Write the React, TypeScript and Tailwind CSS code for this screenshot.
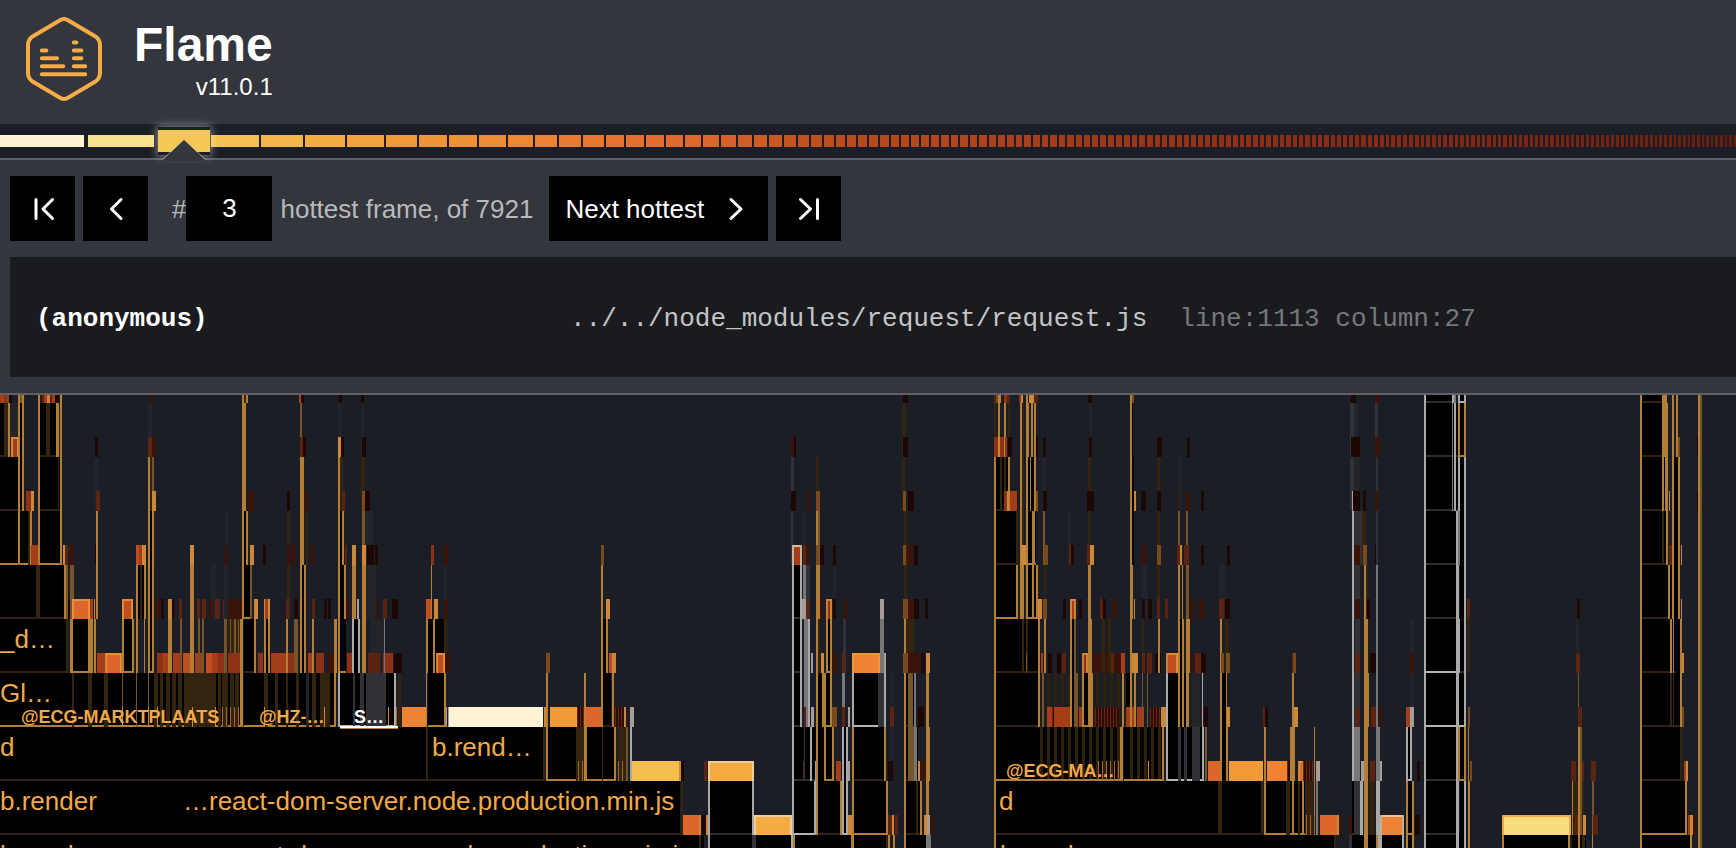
import { useState } from 'react';
import type { ReactNode } from 'react';

const ROW = 54;
const HEAT = 20;

// Full-height pieces of a stack frame: outlines, dividers and shading.
const LINES: Record<string, string> = {
  G: '#b27f34',
  M: '#765628',
  D: '#33240f',
  W: '#a9a9a9',
  S: '#77777a',
  E: '#313238',
  F: '#232429',
};

// Frame bodies, each with the colour of its lower edge.
const BODIES: Record<string, string> = {
  X: '#000000',
  K: '#30220f',
  B: '#b27f34',
  N: '#2d2d30',
  V: '#b4b4b4',
};

// Heat strip that sits on top of a frame, coldest to hottest.
const HEATS: Record<string, string> = {
  a: '#1d0703',
  b: '#3b1308',
  c: '#5c2410',
  d: '#8d3216',
  e: '#a63d1a',
  f: '#c14e21',
  g: '#dc662b',
  h: '#ed8333',
  i: '#f09a38',
  j: '#f4ac40',
  k: '#f5be4c',
  l: '#f7dd7e',
  m: '#fef4d3',
  q: '#784a1e',
  s: '#a89c99',
  y: '#cd8738',
};

// Each token is a kind, an x position and a width.
const ROWS: string[] = [
  'e0,4 d4,3 q7,2 a9,3 G18,2 M20,2 G22,2 D24,1 G38,2 c42,2 e44,3 y47,3 c50,2 e52,3 a55,4 G60,2 b149,3 G242,2 D244,2 G246,2 e299,2 a301,3 a339,3 a361,3 a903,5 c994,2 q996,2 G998,3 d1004,3 c1007,3 d1019,3 y1021,2 G1026,2 y1029,5 c1034,4 a1088,4 G1130,2 q1132,2 a1351,5 b1375,5 N1424,30 W1424,2 W1452,2 S1454,2 W1458,2 V1460,4 W1464,2 K1640,22 G1640,2 G1662,5 G1672,2 G1676,2 G1698,2 M1700,2',
  'K0,24 D4,4 G8,2 F10,8 e11,8 o11,8 G18,2 X20,2 G22,2 G38,2 K40,17 D46,4 G56,2 G58,1 G60,2 a95,3 F148,4 c148,4 b152,4 G242,4 M300,2 c300,3 a303,3 F338,4 y338,3 a341,3 F361,3 a362,4 b791,3 a794,2 D902,4 a903,5 D994,2 G998,2 G1004,2 D1008,2 d994,4 y998,2 d1000,4 d1005,2 a1008,4 G1020,2 D1023,1 G1026,3 G1031,2 G1034,2 a1036,2 a1043,3 F1089,3 a1089,3 G1130,2 X1132,1 a1157,5 a1187,3 E1350,4 F1354,4 a1351,9 E1375,3 b1375,5 N1424,36 W1424,2 S1452,1 W1454,2 B1458,8 G1458,2 G1464,2 K1640,24 G1640,2 G1662,2 G1664,4 G1672,2 G1676,2 q1678,2 a1697,2 G1698,2 M1700,2',
  'K0,22 G18,2 G22,2 d26,5 y31,3 G38,2 K40,20 D58,1 G60,2 F94,4 c96,4 G148,2 D150,2 M152,2 y152,4 G242,4 b248,6 a287,3 G300,4 b305,3 G338,2 D340,3 c342,3 D361,4 q362,3 a365,5 E791,3 a791,5 b807,3 D816,3 q816,4 D902,3 q903,3 a908,6 K996,14 G994,2 D1000,2 D1004,2 G1008,2 d1004,3 y1007,2 e1010,7 G1020,2 D1022,2 G1026,2 X1028,8 G1030,1 G1034,2 q1036,2 F1042,4 a1043,4 D1088,3 a1087,7 G1130,2 X1132,2 y1134,2 a1141,5 D1157,3 a1157,4 b1177,4 F1178,4 b1186,4 a1201,3 E1350,4 F1354,6 a1352,8 s1352,1 a1363,3 E1376,2 b1375,3 N1424,36 W1424,2 S1452,1 W1454,2 X1460,4 W1458,2 W1464,2 K1640,26 G1640,2 G1662,2 G1665,3 y1669,1 G1672,2 X1674,4 G1678,2 a1697,2 G1698,2 M1700,2',
  'B0,30 G18,2 D28,2 G30,2 e31,7 G38,2 B40,20 G60,2 y63,2 c65,3 b70,4 a95,2 G96,2 f136,4 e139,3 y142,4 G148,2 X150,3 G152,2 D154,1 y190,4 F225,3 b225,3 G242,2 X244,2 G246,2 y250,4 a263,3 D287,3 b287,4 b293,3 G300,4 D306,2 b311,3 G338,2 X340,2 G342,2 c345,2 y352,4 M362,3 F365,8 y362,4 a367,4 a371,3 a375,3 d431,3 b444,4 q601,3 E791,2 F803,3 e794,6 w792,10 c803,3 b806,3 G816,2 M818,2 q816,3 a820,4 a833,3 D904,3 q903,3 b907,6 a914,4 K994,22 G994,2 D1016,2 G1020,2 D1022,2 B1026,10 G1026,2 G1032,3 y1021,5 M1043,2 q1044,4 F1068,3 c1069,2 a1071,3 D1088,2 c1087,3 y1090,4 G1130,2 X1132,2 b1142,4 D1157,3 q1157,4 M1178,2 M1186,2 c1177,3 y1180,2 c1184,5 a1201,3 a1227,3 W1352,2 E1354,8 b1354,6 D1362,4 q1363,4 E1376,2 a1375,1 N1424,32 W1424,2 W1456,2 S1458,2 X1460,4 W1464,2 K1640,26 G1640,2 D1662,2 G1666,2 c1669,3 G1672,2 X1674,4 G1678,2 y1681,1 G1698,2 M1700,2',
  'K0,66 D36,4 G64,2 M66,2 a68,3 M70,4 g72,18 o72,18 e90,3 y94,1 G96,2 f122,11 o122,11 X138,6 G136,2 D140,2 G144,2 G148,2 X150,2 G152,2 b156,4 a161,3 y168,4 a172,2 c179,3 G190,4 F210,6 c197,3 c202,4 b209,3 c215,5 c223,3 b227,15 F224,4 B242,8 G242,2 M250,2 y254,4 e265,3 y264,1 y268,2 D287,3 c286,3 a294,4 G300,2 X302,2 G304,2 c312,3 a324,3 a328,3 X340,4 G338,2 G344,2 b346,3 G352,4 s357,2 G362,4 c368,3 b373,5 c383,4 a392,6 F366,10 f426,5 G431,1 y434,4 F444,3 b444,4 G601,2 y606,4 N794,6 W792,2 W800,2 S803,3 E806,4 s802,4 c806,3 G816,4 b820,3 d828,3 o826,6 F833,3 a833,3 b844,3 s880,4 D904,3 q903,5 b908,6 a914,5 a925,3 B994,24 G1016,2 G994,2 G1020,4 B1026,10 G1026,2 G1032,2 G1036,2 y1038,4 D1044,2 q1043,4 a1063,3 e1071,4 o1070,6 a1079,3 G1088,3 c1100,3 a1103,3 b1113,4 G1130,3 y1134,1 F1142,5 a1142,3 a1148,4 D1157,3 c1157,3 c1165,3 G1178,2 G1182,1 M1186,3 b1190,4 b1199,5 F1219,6 c1219,5 a1225,5 W1352,2 E1354,6 b1355,5 G1364,2 D1366,2 a1367,3 S1376,2 N1424,34 W1424,2 W1456,3 X1460,4 W1464,2 c1467,3 a1577,3 K1640,30 G1640,2 G1668,2 X1670,2 G1672,2 X1674,4 G1678,2 y1681,1 G1698,2 M1700,2',
  'K0,66 D66,2 B72,16 G70,3 G88,5 G94,2 e97,8 g106,15 o105,17 B122,12 G122,2 G132,2 G136,2 B148,6 G144,1 G148,2 G152,2 d157,6 e163,5 G168,4 e173,8 M180,2 f183,7 G190,4 e195,8 M198,2 M202,2 f206,6 e212,6 d218,7 M224,3 D228,12 M230,1 M234,2 M238,1 d228,12 G240,3 K244,10 G254,2 d258,5 X266,3 G264,2 G268,2 e271,15 d288,6 G286,2 M294,4 X302,4 G300,2 G304,2 e308,6 G312,2 d316,8 b328,8 B338,8 G334,3 G338,2 d347,5 X354,4 W352,2 W358,2 G362,4 F370,14 c368,12 d383,10 S384,1 a394,8 X428,16 G426,2 G433,2 D444,3 f437,8 o436,9 b445,5 q546,4 X603,3 G601,2 G606,2 f609,3 y612,4 N794,6 W792,2 W800,2 S804,4 W808,2 s811,2 G816,2 D818,2 y821,3 B826,6 G826,2 G830,2 b833,4 E843,3 c842,3 h852,28 o852,28 S880,4 s884,2 G904,2 D906,8 q903,6 b908,12 a921,4 y926,4 K994,44 G994,2 D1022,2 D1026,2 q1026,1 G1038,2 G1044,2 e1041,2 a1048,4 a1057,4 c1062,4 X1072,3 G1070,2 M1074,2 d1084,3 o1082,6 G1088,4 b1093,15 c1108,6 b1114,8 e1121,4 D1102,3 D1108,3 G1130,2 y1132,6 D1142,2 c1142,3 c1147,5 a1155,6 G1158,2 f1168,10 o1166,12 X1180,3 G1178,2 G1182,2 G1186,4 b1191,3 c1195,6 a1201,5 G1220,2 D1225,4 q1221,3 q1226,4 c1292,2 q1293,3 W1352,2 E1355,5 c1355,5 G1364,4 a1370,8 S1376,2 F1410,3 b1410,4 V1424,32 W1424,2 W1456,4 N1460,4 W1464,2 D1467,3 F1576,3 c1576,4 K1640,38 G1640,2 G1670,2 G1673,1 X1676,4 G1680,2 y1682,2 G1698,2 M1700,2',
  'B0,242 D72,2 D88,4 D104,4 M122,1 M136,1 M148,1 D154,4 D160,3 D166,4 D172,4 D178,4 D184,32 D218,3 D222,6 D230,4 D235,4 G240,3 y122,1 y148,1 y157,1 y192,1 y215,1 r222,18 B244,92 D264,4 D275,3 D286,2 D296,3 F306,3 D312,4 D320,10 M334,1 G334,2 y264,1 y324,1 V338,58 E353,2 E360,4 E366,20 W338,2 W394,2 y388,1 r396,6 D398,3 h402,25 B428,16 G426,1 G444,2 s446,1 s448,1 m449,94 y544,2 G546,2 i550,27 t577,8 G584,2 g586,17 K603,8 G601,2 G612,2 t615,10 y624,2 s630,4 N794,6 W792,2 W800,2 S804,4 W808,2 c804,2 s811,3 X818,4 G816,2 G822,2 B824,8 G824,2 G830,2 q832,5 S842,3 c842,3 s848,2 V852,32 E878,6 W852,2 W884,2 F890,3 c890,4 K906,10 G904,2 M908,5 S914,2 a918,6 G926,3 K994,44 G994,2 G1038,2 M1042,2 z1047,22 e1047,23 t1052,2 X1072,4 G1070,2 M1074,4 e1079,3 B1082,8 G1082,2 G1088,5 z1096,24 t1095,24 G1122,2 X1126,4 e1126,10 G1130,2 G1134,2 e1137,7 M1142,1 M1147,1 t1150,10 y1161,5 X1168,10 W1166,2 G1178,2 X1180,6 G1182,2 G1186,3 b1193,8 F1192,8 W1202,1 a1204,4 X1222,4 G1220,2 y1226,4 G1226,1 a1264,4 c1263,2 G1292,2 y1294,4 W1352,2 E1354,6 c1356,4 G1364,4 G1368,1 c1371,5 S1376,2 b1379,3 F1410,3 e1406,4 s1410,4 V1424,32 W1424,2 W1456,3 V1459,6 W1464,2 q1468,2 M1578,1 c1578,4 K1640,40 G1640,2 D1670,2 D1673,1 G1680,2 q1682,2 G1698,2 M1700,2',
  'K0,427 D426,2 K428,115 D543,2 B548,28 G546,2 D576,10 r578,8 G584,3 B587,28 D602,1 G614,2 D618,10 r618,10 M626,2 W630,2 k632,47 y679,2 a681,3 c704,3 j708,46 w708,46 N794,22 W792,2 c803,2 E804,1 W810,2 s815,3 X818,6 G816,2 B824,8 G824,2 G832,2 e836,5 X844,4 W842,2 W846,2 s848,2 K854,30 G852,2 G884,2 F890,3 a888,5 K906,12 G904,2 M908,8 S914,3 y918,2 b921,9 G926,4 B994,128 G994,2 z1040,80 r1098,22 G1120,3 B1124,40 z1130,30 y1148,1 G1162,2 V1166,38 E1178,3 E1184,3 E1192,8 W1166,2 W1202,2 M1205,2 g1208,12 X1222,4 G1220,2 G1226,2 i1229,34 G1264,2 h1267,20 t1287,4 G1290,4 G1294,1 g1299,3 o1298,6 t1303,10 G1314,1 s1316,4 W1352,2 S1354,6 s1361,3 G1364,4 c1370,5 S1376,4 s1380,2 V1406,6 W1406,2 W1410,2 a1417,3 N1424,32 W1424,2 W1456,3 B1458,8 G1458,2 G1464,2 G1468,1 q1470,2 M1578,2 c1571,5 G1578,2 M1580,2 c1582,2 c1591,5 K1640,42 G1640,2 D1680,2 e1684,2 y1686,2 G1698,2 M1700,2',
  'K0,680 D681,2 g683,17 y699,2 a702,4 y706,2 N710,42 W708,2 W752,2 j754,38 w754,38 V794,20 W792,2 W814,2 K818,22 G816,2 G840,2 V842,6 W842,2 W846,2 y848,4 B854,32 G852,2 G886,2 c888,4 y892,2 c895,3 K906,16 G904,2 D916,2 G920,2 G926,3 y924,3 s927,3 b931,3 K994,267 G994,2 D1218,4 D1261,2 B1266,40 G1264,2 D1286,4 G1292,2 D1298,2 G1302,2 D1305,8 G1314,1 S1316,2 r1306,12 g1320,17 y1337,2 b1340,2 b1349,3 N1352,8 E1354,6 W1360,3 G1364,4 D1370,4 W1376,4 h1382,28 w1380,32 B1406,6 G1406,2 G1412,2 a1415,5 N1424,34 W1424,2 W1456,3 X1460,4 W1464,2 G1468,2 l1502,69 o1502,69 D1572,12 G1572,1 c1575,4 G1578,2 M1580,2 y1583,3 M1592,2 c1593,5 B1640,45 G1640,2 G1685,2 e1688,3 y1690,3 b1693,3 G1698,2 M1700,2',
  'X0,704 D699,2 X710,42 W708,2 E752,4 X756,36 W791,2 G793,2 X795,56 G851,3 X854,32 D886,2 G888,2 G893,2 X906,20 G904,2 S926,5 X996,340 G994,2 D1334,2 E1349,3 X1352,50 G1364,4 G1376,2 W1378,4 W1402,2 X1408,4 G1406,2 G1412,2 X1424,42 W1424,2 W1456,3 W1464,2 G1468,2 X1504,64 G1502,2 G1568,2 X1572,14 G1578,2 D1582,3 G1592,1 X1642,48 G1640,2 G1690,2 G1698,2 M1700,2',
].map((row) => row.replace('h1382,28 w1380,32', 'h1382,20 w1380,24'));

type Label = { row: number; x: number; text: string; white?: boolean };

const FRAME_LABELS: Label[] = [
  { row: 5, x: 0, text: '_d…' },
  { row: 6, x: 0, text: 'Gl…' },
  { row: 7, x: 0, text: 'd' },
  { row: 7, x: 432, text: 'b.rend…' },
  { row: 8, x: 0, text: 'b.render' },
  { row: 8, x: 183, text: '…react-dom-server.node.production.min.js' },
  { row: 8, x: 999, text: 'd' },
  { row: 9, x: 0, text: 'b.render' },
  { row: 9, x: 200, text: '…react-dom-server.node.production.min.js' },
  { row: 9, x: 1000, text: 'b.render' },
];

const AREA_LABELS: Label[] = [
  { row: 6, x: 21, text: '@ECG-MARKTPLAATS' },
  { row: 6, x: 259, text: '@HZ-…' },
  { row: 6, x: 354, text: 'S…', white: true },
  { row: 7, x: 1006, text: '@ECG-MA…' },
];

// The first row is scrolled so that only its last eight pixels show.
const rowTop = (row: number) => row * ROW - 46;

function Piece({ kind, x, w, top }: { kind: string; x: number; w: number; top: number }) {
  const heatTop = top + ROW - HEAT;
  if (kind in LINES) return <rect x={x} y={top} width={w} height={ROW} fill={LINES[kind]} />;
  if (kind in BODIES) {
    return (
      <>
        <rect x={x} y={top} width={w} height={ROW} fill="#000000" />
        <rect x={x} y={top + ROW - 2} width={w} height={2} fill={BODIES[kind]} />
      </>
    );
  }
  if (kind in HEATS) return <rect x={x} y={heatTop} width={w} height={HEAT} fill={HEATS[kind]} />;
  if (kind === 'o' || kind === 'w') {
    // Left, top and right edges only: the lower edge belongs to the frame below.
    return (
      <path
        d={`M${x + 1} ${heatTop + HEAT}V${heatTop + 1}H${x + w - 1}V${heatTop + HEAT}`}
        fill="none"
        stroke={kind === 'o' ? '#ee9a3c' : '#ecd6b4'}
        strokeOpacity={0.8}
        strokeWidth={2}
      />
    );
  }
  const step = kind === 'z' ? 7 : kind === 'r' ? 4 : 3;
  const y = kind === 'z' ? top : heatTop;
  const height = kind === 'z' ? ROW - 2 : HEAT;
  const fill = kind === 'z' ? '#2e210e' : kind === 'r' ? '#a9622a' : '#6b2411';
  const base = kind === 't' ? <rect x={x} y={y} width={w} height={height} fill="#2b0d06" /> : null;
  const count = Math.ceil(w / step);
  return (
    <>
      {base}
      {Array.from({ length: count }, (_, i) => (
        <rect key={i} x={x + i * step} y={y} width={kind === 'z' ? 3 : 1} height={height} fill={fill} />
      ))}
    </>
  );
}

function FlameGraph() {
  return (
    <svg className="block h-[494px] w-full" role="img" aria-label="Flame graph" shapeRendering="crispEdges">
      {ROWS.map((row, r) => (
        <g key={r}>
          {row.split(' ').map((token, i) => {
            const [x, w] = token.slice(1).split(',').map(Number);
            return <Piece key={i} kind={token[0]} x={x} w={w} top={rowTop(r)} />;
          })}
        </g>
      ))}
      <rect x={340} y={331} width={58} height={2} fill="#ffffff" />
      <rect x={340} y={333} width={58} height={1} fill="#b27f34" />
      <g className="text-[26px]" fill="#f2a947">
        {FRAME_LABELS.map((l, i) => (
          <text key={i} x={l.x} y={rowTop(l.row) + 29}>
            {l.text}
          </text>
        ))}
      </g>
      <g className="text-[18px] font-bold">
        {AREA_LABELS.map((l, i) => (
          <text key={i} x={l.x} y={rowTop(l.row) + 50} fill={l.white ? '#ffffff' : '#f2a947'}>
            {l.text}
          </text>
        ))}
      </g>
    </svg>
  );
}

const STARTS = [
  0, 88, 158, 211, 261, 305, 347, 386, 419, 449, 479, 508, 535, 559, 583, 606, 626, 646, 666, 685, 703, 721, 738, 754,
  769, 784, 798, 811, 824, 836, 847, 858,
];

const PITCHES: [number, number][] = [
  [858, 11.2],
  [900, 10.2],
  [990, 9.1],
  [1100, 8],
  [1200, 7],
  [1300, 6.4],
  [1500, 5.3],
  [1736, 4.5],
  [2800, 3],
];

const TONES: [number, number[]][] = [
  [0, [254, 244, 211]],
  [100, [248, 222, 127]],
  [180, [246, 200, 86]],
  [235, [245, 189, 75]],
  [320, [243, 171, 62]],
  [400, [240, 151, 54]],
  [500, [238, 138, 52]],
  [600, [232, 115, 45]],
  [700, [220, 102, 42]],
  [800, [194, 80, 33]],
  [860, [182, 72, 29]],
  [940, [180, 70, 29]],
  [1100, [154, 56, 25]],
  [1300, [138, 44, 21]],
  [1500, [126, 38, 18]],
  [1736, [104, 29, 14]],
  [2800, [40, 12, 8]],
];

function between<T>(stops: [number, T][], x: number): [T, T, number] {
  for (let i = 1; i < stops.length; i++) {
    if (x <= stops[i][0]) return [stops[i - 1][1], stops[i][1], (x - stops[i - 1][0]) / (stops[i][0] - stops[i - 1][0])];
  }
  const last = stops[stops.length - 1][1];
  return [last, last, 0];
}

function buildSegments() {
  const starts = [...STARTS];
  let x = 858;
  while (x < 2700) {
    const [a, b, t] = between(PITCHES, x);
    x += a + (b - a) * t;
    starts.push(Math.round(x));
  }
  return starts.slice(0, -1).map((start, i) => {
    const [a, b, t] = between(TONES, start);
    const rgb = a.map((v, c) => Math.round(v + (b[c] - v) * t));
    const gap = i < 2 ? 4 : i === 2 ? 1 : 2;
    return { width: starts[i + 1] - start - gap, gap, color: `rgb(${rgb.join(',')})` };
  });
}

const SEGMENTS = buildSegments();

function HeatStrip() {
  return (
    <div className="relative border-b-2 border-[#5f6167] bg-[#1c1e27] py-[11px]">
      <div className="flex h-3 overflow-hidden">
        {SEGMENTS.map((s, i) => (
          <div
            key={i}
            className="h-3 shrink-0"
            style={{ width: s.width, marginRight: s.gap, backgroundColor: s.color }}
          />
        ))}
      </div>
      <div className="absolute top-[3px] left-[158px] h-7 w-[52px] border-y-[3px] border-[#1c1e27] bg-[#f6c856] shadow-[0_0_8px_1px_rgba(255,255,255,0.5)]" />
      <svg className="absolute top-[15px] left-[162px]" width="44" height="22" viewBox="0 0 44 22" aria-hidden="true">
        <path d="M1 21 L22 0.5 L43 21 V22 H1 Z" fill="#33363d" />
        <path d="M1 20 L22 0.7 L43 20" fill="none" stroke="#c9b78a" strokeOpacity="0.75" />
      </svg>
    </div>
  );
}

function Logo() {
  return (
    <svg width="76" height="84" viewBox="0 0 76 84" fill="none" stroke="#f5ab47" strokeLinecap="round" aria-hidden="true">
      <path
        strokeWidth="4"
        strokeLinejoin="round"
        d="M34 3.2 Q38 0.8 42 3.2 L69 19.2 Q74 22.5 74 28 V56 Q74 61.5 69 64.8 L42 80.8 Q38 83.2 34 80.8 L7 64.8 Q2 61.5 2 56 V28 Q2 22.5 7 19.2 Z"
      />
      <path
        strokeWidth="4"
        d="M15.8 33.5H20.4 M15.8 41.3H31 M15.8 49.2H37.2 M15.8 57.2H59.2 M47.8 25.6H50.4 M47.8 33.5H55.4 M47.8 41.3H55.4 M47.8 49.2H59.2"
      />
    </svg>
  );
}

function Arrow({ d }: { d: string }) {
  return (
    <svg width="24" height="24" viewBox="0 0 24 24" fill="none" stroke="#ffffff" strokeWidth="3" strokeLinecap="round" strokeLinejoin="round" aria-hidden="true">
      <path d={d} />
    </svg>
  );
}

function NavButton({ label, children }: { label: string; children: ReactNode }) {
  return (
    <button type="button" aria-label={label} className="flex size-[65px] shrink-0 items-center justify-center bg-black">
      {children}
    </button>
  );
}

export default function App() {
  const [frame, setFrame] = useState('3');
  return (
    <div className="flex h-screen flex-col overflow-hidden bg-[#1c1e27] font-['Liberation_Sans',Arial,sans-serif] text-[26px] leading-8 text-white">
      <header className="flex h-[124px] shrink-0 items-start gap-8 bg-[#33363c] px-[26px] pt-[17px]">
        <Logo />
        <div className="flex flex-col items-end">
          <h1 className="pt-1 text-[48px] leading-[48px] font-bold">Flame</h1>
          <p className="text-2xl leading-9">v11.0.1</p>
        </div>
      </header>
      <HeatStrip />
      <section className="shrink-0 border-b-2 border-[#5f6167] bg-[#33363c] py-4 pl-2.5">
        <div className="flex items-center">
          <div className="flex gap-2">
            <NavButton label="Hottest frame">
              <Arrow d="M5 2.5V21.5 M21.5 2.5L12 12L21.5 21.5" />
            </NavButton>
            <NavButton label="Previous frame">
              <Arrow d="M17 2.5L7.5 12L17 21.5" />
            </NavButton>
          </div>
          <label htmlFor="rank" className="pl-6 text-[#b8b9bb]">
            #
          </label>
          <input
            id="rank"
            value={frame}
            onChange={(e) => setFrame(e.target.value)}
            className="h-[65px] w-[86px] bg-black text-center text-white outline-none"
          />
          <span className="pl-2 text-[#b8b9bb]">hottest frame, of 7921</span>
          <div className="flex gap-2 pl-4">
            <button type="button" className="flex h-[65px] w-[219px] items-center gap-5 bg-black pl-4">
              Next hottest
              <Arrow d="M7 2.5L17 12L7 21.5" />
            </button>
            <NavButton label="Coldest frame">
              <Arrow d="M3.5 2.5L13.5 12L3.5 21.5 M20.5 2.5V21.5" />
            </NavButton>
          </div>
        </div>
        <div className="mt-4 flex h-[120px] items-center bg-[#1a1b1e] pt-1 pl-[26px] font-['Liberation_Mono','Courier_New',monospace] whitespace-pre">
          <strong className="w-[534px] shrink-0">(anonymous)</strong>
          <span className="text-[#c3c4c6]">../../node_modules/request/request.js</span>
          <span className="pl-8 text-[#77787b]">line:1113 column:27</span>
        </div>
      </section>
      <main className="min-h-0 flex-1 overflow-hidden">
        <FlameGraph />
      </main>
    </div>
  );
}
